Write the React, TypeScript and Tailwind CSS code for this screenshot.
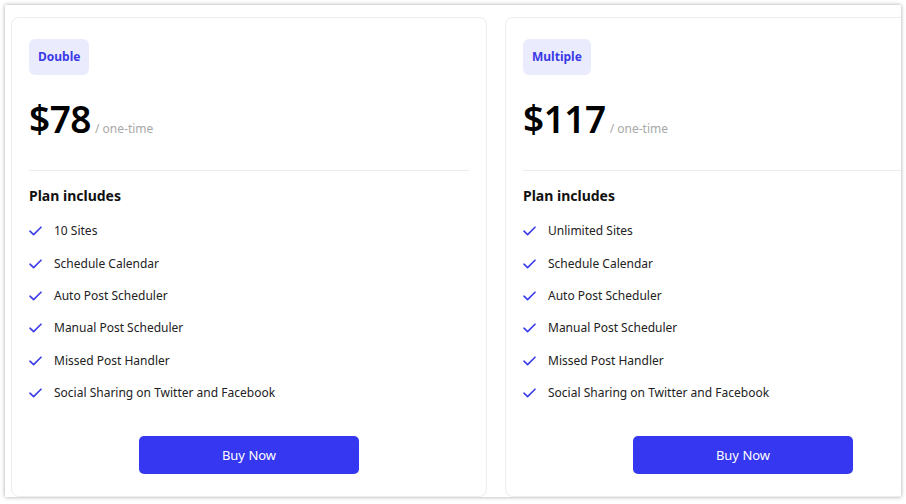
const plans = [
  {
    name: "Double",
    price: "$78",
    features: [
      "10 Sites",
      "Schedule Calendar",
      "Auto Post Scheduler",
      "Manual Post Scheduler",
      "Missed Post Handler",
      "Social Sharing on Twitter and Facebook",
    ],
  },
  {
    name: "Multiple",
    price: "$117",
    features: [
      "Unlimited Sites",
      "Schedule Calendar",
      "Auto Post Scheduler",
      "Manual Post Scheduler",
      "Missed Post Handler",
      "Social Sharing on Twitter and Facebook",
    ],
  },
];

function Check() {
  return (
    <svg width="13" height="10" viewBox="0 0 13 10" fill="none" className="shrink-0">
      <path d="M1 5.2 L4.6 8.6 L12 1.2" stroke="#3a3ae6" strokeWidth="1.6" strokeLinecap="round" strokeLinejoin="round" />
    </svg>
  );
}

function PlanCard({ plan }: { plan: (typeof plans)[number] }) {
  return (
    <div className="w-[476px] shrink-0 rounded-lg border border-[#ededed] bg-white px-[17px] pt-[21px] pb-[20px] flex flex-col">
      <div className="self-start h-9 px-[9px] rounded-md bg-[#ebebfe] text-[#3a3ae6] text-xs font-bold flex items-center">
        {plan.name}
      </div>

      <div className="mt-[22px] flex items-baseline h-[44px]">
        <span className="text-[37px] leading-[44px] font-semibold text-black tracking-[-0.5px]">{plan.price}</span>
        <span className="ml-[4px] text-xs text-[#a8a8a8]">/ one-time</span>
      </div>

      <div className="mt-[29px] h-px bg-[#ebebeb]" />

      <h3 className="mt-[15px] text-sm leading-5 font-bold text-[#111]">Plan includes</h3>

      <ul className="mt-[9px] flex flex-col">
        {plan.features.map((f, i) => (
          <li key={i} className="h-[32.4px] flex items-center gap-[12px] text-[12px] text-[#222]">
            <Check />
            <span>{f}</span>
          </li>
        ))}
      </ul>

      <button className="mt-[27px] self-center w-[220px] h-[38px] rounded-[5px] bg-[#3538f0] text-white text-[13px]">
        Buy Now
      </button>
    </div>
  );
}

export default function App() {
  return (
    <div className="w-[906px] h-[504px] bg-white p-[5px] pb-[7px]" style={{ fontFamily: '"Noto Sans", sans-serif' }}>
      <div className="h-full overflow-hidden bg-white shadow-[0_0_4px_rgba(0,0,0,0.35)] pl-[6px] pt-[12px] flex gap-[18px]">
        {plans.map((p) => (
          <PlanCard key={p.name} plan={p} />
        ))}
      </div>
    </div>
  );
}
